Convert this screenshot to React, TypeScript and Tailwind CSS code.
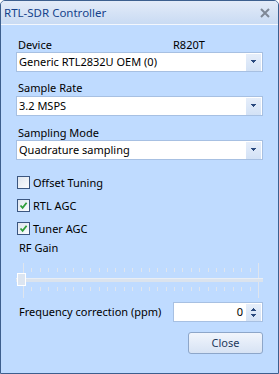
import React from "react";

const font = { fontFamily: '"Noto Sans", "Open Sans", sans-serif' };

function Arrow() {
  return (
    <svg width="7" height="4" viewBox="0 0 7 4" className="block">
      <rect x="1" y="0" width="5" height="1" fill="#2b4a7e" />
      <rect x="2" y="1" width="3" height="1" fill="#2b4a7e" />
      <rect x="3" y="2" width="1" height="1" fill="#2b4a7e" />
    </svg>
  );
}

function Combo({ text }: { text: string }) {
  return (
    <div className="flex h-[20px] items-center border border-[#a7c0e2] bg-white">
      <div className="flex-1 whitespace-nowrap pl-[2px] text-[11px] leading-[16px] text-black">{text}</div>
      <div className="mr-[1px] flex h-[17px] w-[15px] items-center justify-center bg-gradient-to-b from-[#e6eefa] to-[#d3e2f6]">
        <Arrow />
      </div>
    </div>
  );
}

function Check({ checked, label }: { checked: boolean; label: string }) {
  return (
    <div className="flex h-[13px] items-center gap-[3px]">
      <div className="flex h-[13px] w-[13px] items-center justify-center border border-[#3b5680] bg-gradient-to-br from-[#dfe6ef] to-[#fbfcfe]">
        {checked && (
          <svg width="9" height="9" viewBox="0 0 9 9">
            <path d="M1.5 4.5 L3.6 6.8 L7.6 1.8" fill="none" stroke="#2f9e3a" strokeWidth="1.8" />
          </svg>
        )}
      </div>
      <span className="whitespace-nowrap text-[11px] leading-[16px] text-black">{label}</span>
    </div>
  );
}

function Slider() {
  const ticks = Array.from({ length: 29 }, (_, i) => 7 + Math.round((i * 235) / 28));
  return (
    <svg width="247" height="35" viewBox="0 0 247 35" className="block">
      {ticks.map((x, i) =>
        i === 0 || i === 28 ? (
          <rect key={i} x={x} y={0} width={1} height={35} fill="#dfe5ee" />
        ) : (
          <g key={i}>
            <rect x={x} y={5} width={1} height={4} fill="#dfe5ee" />
            <rect x={x} y={24} width={1} height={4} fill="#dfe5ee" />
          </g>
        )
      )}
      <rect x={0} y={15} width={247} height={4} fill="#dbe3ed" />
      <rect x={0} y={15} width={247} height={1} fill="#e9eef5" />
      <rect x={1.5} y={10.5} width={8} height={12} fill="#dce5f1" stroke="#ffffff" strokeWidth={1} />
    </svg>
  );
}

export default function App() {
  return (
    <div style={font} className="h-[374px] w-[279px] overflow-hidden">
      <div className="flex h-[374px] w-[279px] flex-col rounded-t-[5px] border border-[#3d5f8e] bg-[#bfdbff]">
        <div className="flex h-[23px] items-center justify-between rounded-t-[4px] bg-gradient-to-b from-[#e3ebf8] to-[#c9dbf3] pl-[3px] pr-[8px]">
          <span className="whitespace-nowrap text-[11.5px] leading-[16px] text-[#15428b]">RTL-SDR Controller</span>
          <svg width="10" height="10" viewBox="0 0 10 10">
            <path d="M1 1 L9 9 M9 1 L1 9" stroke="#7f8896" strokeWidth="2" />
          </svg>
        </div>
        <div className="h-[1px] bg-[#f3f7fd]" />
        <div className="flex flex-col px-[15px] pt-[12px]">
          <div className="flex h-[15px] items-start whitespace-nowrap text-[11px] leading-[16px] text-black">
            <span className="ml-[2px] w-[155px]">Device</span>
            <span>R820T</span>
          </div>
          <Combo text="Generic RTL2832U OEM (0)" />
          <div className="mt-[8px] ml-[2px] h-[16px] whitespace-nowrap text-[11px] leading-[16px] text-black">Sample Rate</div>
          <Combo text="3.2 MSPS" />
          <div className="mt-[9px] ml-[2px] h-[15px] whitespace-nowrap text-[11px] leading-[16px] text-black">Sampling Mode</div>
          <Combo text="Quadrature sampling" />
          <div className="mt-[16px] ml-[1px]">
            <Check checked={false} label="Offset Tuning" />
          </div>
          <div className="mt-[10px] ml-[1px]">
            <Check checked={true} label="RTL AGC" />
          </div>
          <div className="mt-[10px] ml-[1px]">
            <Check checked={true} label="Tuner AGC" />
          </div>
          <div className="mt-[5px] ml-[3px] h-[16px] whitespace-nowrap text-[11px] leading-[16px] text-black">RF Gain</div>
          <div className="mt-[7px]">
            <Slider />
          </div>
          <div className="mt-[4px] flex h-[20px] items-center">
            <span className="ml-[3px] w-[154px] whitespace-nowrap text-[11px] leading-[16px] text-black">Frequency correction (ppm)</span>
            <div className="flex h-[20px] flex-1 items-center border border-[#a7c0e2] bg-white">
              <span className="flex-1 pr-[3px] text-right text-[11px] leading-[16px] text-black">0</span>
              <div className="mr-[1px] flex h-[17px] w-[15px] flex-col items-center justify-center gap-[3px] bg-gradient-to-b from-[#e6eefa] to-[#d3e2f6]">
                <svg width="5" height="3" viewBox="0 0 5 3" className="block">
                  <rect x="2" y="0" width="1" height="1" fill="#2b4a7e" />
                  <rect x="1" y="1" width="3" height="1" fill="#2b4a7e" />
                  <rect x="0" y="2" width="5" height="1" fill="#2b4a7e" />
                </svg>
                <svg width="5" height="3" viewBox="0 0 5 3" className="block">
                  <rect x="0" y="0" width="5" height="1" fill="#2b4a7e" />
                  <rect x="1" y="1" width="3" height="1" fill="#2b4a7e" />
                  <rect x="2" y="2" width="1" height="1" fill="#2b4a7e" />
                </svg>
              </div>
            </div>
          </div>
          <div className="mt-[10px] flex justify-end">
            <div className="flex h-[22px] w-[75px] items-center justify-center rounded-[3px] border border-[#8da6c9] bg-gradient-to-b from-[#f1f5fc] to-[#d7e3f4] text-[11px] leading-[16px] text-[#1e395b]">
              Close
            </div>
          </div>
        </div>
      </div>
    </div>
  );
}
